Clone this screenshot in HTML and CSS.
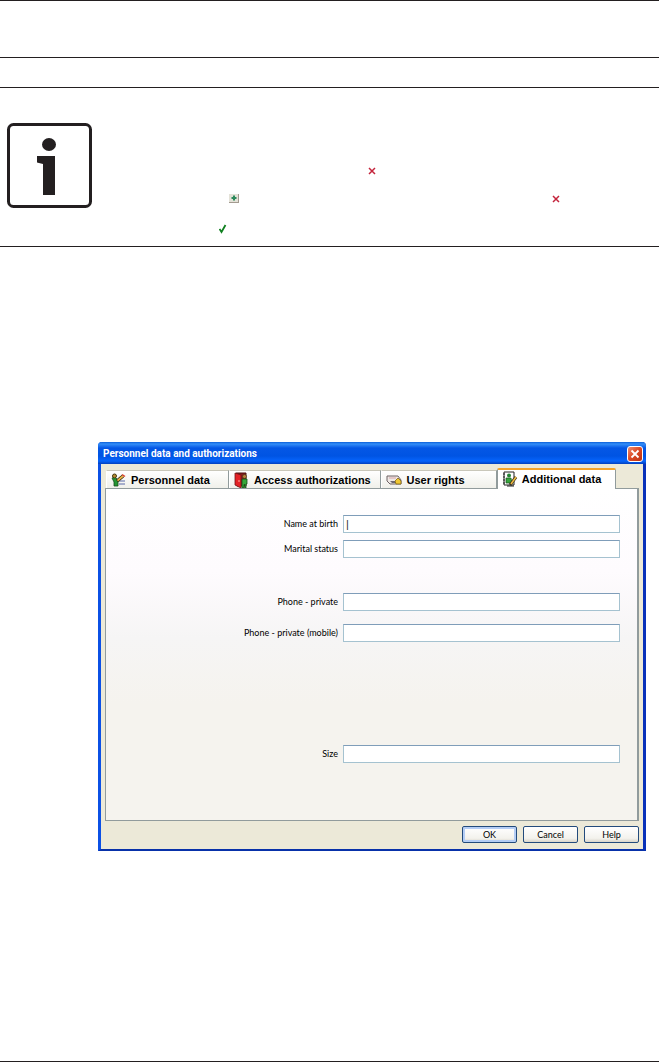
FILE: index.html
```html
<!DOCTYPE html>
<html lang="en">
<head>
<meta charset="utf-8">
<title>Personnel data and authorizations</title>
<link rel="stylesheet" href="styles.css">
</head>
<body>
<header class="page-head"></header>
<div class="head-rule"></div>
<section class="note">
  <svg class="info" viewBox="0 0 85 85" aria-label="Information">
    <rect x="1.5" y="1.5" width="82" height="82" rx="5" fill="#fff" stroke="#231f20" stroke-width="3"/>
    <ellipse cx="42" cy="21.500" rx="7" ry="6.500" fill="#231f20"/>
    <path d="M30 33H48V72H36V41L30 39.500Z" fill="#231f20"/>
  </svg>
  <div class="note-body">
    <div class="note-row row-remove">
      <svg class="mark" viewBox="0 0 8 8"><path d="M1 1L7 7M7 1L1 7" stroke="#c4243c" stroke-width="1.500"/></svg>
    </div>
    <div class="note-row row-add">
      <svg class="plus" viewBox="0 0 10 9"><path d="M0 0H10V9H0Z" fill="#a39b90"/><path d="M0 0H9V8H0Z" fill="#e4e2d8"/><path d="M5 1.500V6.500M2.500 4H7.500" stroke="#2c8a5c" stroke-width="2"/></svg>
      <svg class="mark" viewBox="0 0 8 8"><path d="M1 1L7 7M7 1L1 7" stroke="#c4243c" stroke-width="1.500"/></svg>
    </div>
    <div class="note-row row-apply">
      <svg class="check" viewBox="0 0 8 10"><path d="M.5 5L2.500 8L6.500 1" fill="none" stroke="#108020" stroke-width="1.800"/></svg>
    </div>
  </div>
</section>
<main class="content">
  <div class="dialog" role="dialog" aria-labelledby="title">
    <div class="titlebar">
      <h1 class="title" id="title">Personnel data and authorizations</h1>
      <button class="close" type="button" aria-label="Close"><svg viewBox="0 0 14 14"><path d="M3.500 3.500L10.500 10.500M10.500 3.500L3.500 10.500" stroke="#fff" stroke-width="1.800"/></svg></button>
    </div>
    <form class="dialog-body">
      <div class="tabs" role="tablist">
        <button class="tab tab-personnel" type="button" role="tab">
          <svg class="tab-icon" viewBox="0 0 16 16"><path d="M8 9H14M8 12H14" stroke="#5968a8"/><path d="M1 6L4 5L7 8V14H3V10Z" fill="#239532" stroke="#174d1d" stroke-width=".8"/><circle cx="3.500" cy="4" r="2" fill="#b98c30" stroke="#443810"/><path d="M6 9L12 4" stroke="#3b3013" stroke-width="3.400"/><path d="M6.500 8.600L12 4" stroke="#edb647" stroke-width="1.800"/><path d="M11 2.500L14 4.500" stroke="#d94030" stroke-width="1.500"/></svg>Personnel data</button>
        <button class="tab tab-access" type="button" role="tab">
          <svg class="tab-icon" viewBox="0 0 16 16"><path d="M2 1H12V14H3Z" fill="#851c1c" stroke="#4e1111"/><path d="M1 1L7 3V16L1 13Z" fill="#e32226" stroke="#731318" stroke-width=".8"/><circle cx="10.500" cy="4.500" r="2" fill="#b8823d" stroke="#49351c" stroke-width=".7"/><path d="M8 7H13V12H12V16H10.800V12.500H10V16H8Z" fill="#36a639" stroke="#125018" stroke-width=".8"/><path d="M5 8V10" stroke="#ffb3a0"/></svg>Access authorizations</button>
        <button class="tab tab-rights" type="button" role="tab">
          <svg class="tab-icon" viewBox="0 0 16 16"><path d="M1 4H12L15 8V12H4L1 9Z" fill="#eee9e5" stroke="#6e6265"/><path d="M3 6H10" stroke="#d8a3a8"/><path d="M4 9H9L11 11H6Z" fill="#6d6873"/><path d="M9 9L12 6L15 9V12H10Z" fill="#f0c832" stroke="#806517" stroke-width=".8"/></svg>User rights</button>
        <button class="tab tab-additional active" type="button" role="tab" aria-selected="true">
          <svg class="tab-icon" viewBox="0 0 16 16"><path d="M2 1H12V14H2Z" fill="#fff" stroke="#222"/><path d="M1 3H3M1 6H3M1 9H3M1 12H3" stroke="#222"/><circle cx="7" cy="4.500" r="2" fill="#248233"/><path d="M4 7H9L10 12H4Z" fill="#36a53b" stroke="#17551e" stroke-width=".7"/><path d="M8 14L14 6" stroke="#40351e" stroke-width="3"/><path d="M9 13L14 6" stroke="#f2bd42" stroke-width="1.500"/><path d="M5 15H12" stroke="#222"/></svg>Additional data</button>
      </div>
      <div class="panel" role="tabpanel">
        <label class="label" for="birth">Name at birth</label><input class="field" id="birth" type="text" value="|">
        <label class="label" for="marital">Marital status</label><input class="field" id="marital" type="text">
        <label class="label spaced" for="phone">Phone - private</label><input class="field spaced" id="phone" type="text">
        <label class="label near" for="mobile">Phone - private (mobile)</label><input class="field near" id="mobile" type="text">
        <label class="label far" for="size">Size</label><input class="field far" id="size" type="text">
      </div>
      <div class="actions">
        <button class="button default" type="button">OK</button>
        <button class="button" type="button">Cancel</button>
        <button class="button" type="button">Help</button>
      </div>
    </form>
  </div>
</main>
<footer class="page-foot"></footer>
</body>
</html>
```
FILE: styles.css
```css
* { box-sizing: border-box; }

body {
  display: flex;
  flex-direction: column;
  min-height: 100vh;
  margin: 0;
  background: #fff;
  color: #000;
  font-family: "Liberation Sans", Arial, sans-serif;
}

svg { display: block; flex: none; }

.page-head {
  height: 58px;
  border-top: 1px solid #231f20;
  border-bottom: 1px solid #231f20;
}

.head-rule { height: 30px; border-bottom: 1px solid #231f20; }

.note {
  display: flex;
  padding: 35px 0 12px 7px;
  border-bottom: 1px solid #231f20;
}

.info { width: 85px; height: 85px; }
.note-body { flex: 1; padding-top: 44px; }
.note-row { display: flex; align-items: flex-end; }
.mark { width: 8px; height: 8px; }
.plus { width: 10px; height: 9px; }
.check { width: 8px; height: 10px; }
.row-remove { padding-left: 276px; }
.row-add { padding: 19px 0 0 137px; gap: 313px; }
.row-apply { padding: 21px 0 0 127px; }

.content { flex: 1; padding: 195px 13px 0 98px; }

.dialog {
  border: 3px solid #0b50e5;
  border-top: 0;
  border-right-color: #0831b9;
  border-bottom: 2px solid #0831a9;
  border-radius: 4px 4px 0 0;
  background: #ece9d8;
}

.titlebar {
  display: flex;
  align-items: center;
  justify-content: space-between;
  height: 22px;
  margin: 0 -3px;
  padding: 2px 3px 0 5px;
  border-radius: 4px 4px 0 0;
  background: linear-gradient(#0c5fd8 0, #338ef8 2px, #0557e5 6px, #0054e3 14px, #0664fc 19px, #0340bd 22px);
}

.title {
  margin: 0;
  color: #fff;
  font: bold 10px/14px Roboto, sans-serif;
}

.close {
  width: 16px;
  height: 16px;
  padding: 0;
  border: 1px solid #fff;
  border-radius: 3px;
  background: linear-gradient(135deg, #f18e70, #da4823 50%, #bb3212);
}

.dialog-body { padding: 4px 4px 6px; }
.tabs { display: flex; align-items: flex-end; height: 20px; padding-left: 1px; }

.tab {
  display: flex;
  align-items: center;
  gap: 4px;
  height: 18px;
  padding: 0 0 0 4px;
  border: 1px solid #919b9c;
  border-top-color: #c9c7ba;
  border-left-color: #fff;
  border-bottom: 0;
  background: linear-gradient(#fff, #f0f0ea);
  color: #000;
  font: bold 11px/16px "Liberation Sans", Arial, sans-serif;
  white-space: nowrap;
}

.tab-icon { width: 16px; height: 16px; }
.tab-personnel { flex: 123; }
.tab-access { flex: 154; }
.tab-rights { flex: 115; }
.tab-additional { flex: 119; margin-right: 23px; }

.active {
  height: 21px;
  margin-bottom: -1px;
  padding-bottom: 2px;
  border-top: 2px solid #f5a429;
  border-left-color: #919b9c;
  border-radius: 2px 2px 0 0;
  background: #fff;
}

.panel {
  display: grid;
  grid-template-columns: 232px 1fr;
  column-gap: 5px;
  row-gap: 7px;
  align-items: center;
  padding: 26px 17px 57px 0;
  border: 1px solid #919b9c;
  border-right-width: 2px;
  background: linear-gradient(#fff 0, #fefbfe 25%, #f6f5f5 45%, #f5f3ee 65%, #f5f3ee);
}

.label {
  font: 9px/14px Lato, "Liberation Sans", sans-serif;
  text-align: right;
}

.field {
  width: 100%;
  height: 18px;
  padding: 0 2px;
  border: 1px solid #a5c2d0;
  border-top-color: #7f9db9;
  border-radius: 0;
  background: #fff;
  color: #333;
  font: 11px/14px "Liberation Sans", Arial, sans-serif;
}

.spaced { margin-top: 28px; }
.near { margin-top: 6px; }
.far { margin-top: 96px; }

.actions {
  display: flex;
  justify-content: flex-end;
  gap: 6px;
  padding-top: 5px;
}

.button {
  width: 55px;
  height: 17px;
  padding: 0;
  border: 1px solid #234b7c;
  border-radius: 2px;
  background: linear-gradient(#fff, #f3f2ed 75%, #d9d5ca);
  color: #000;
  font: 9px/14px Lato, "Liberation Sans", sans-serif;
}

.default { box-shadow: inset 0 0 0 2px #b4cdf5; }
.page-foot { border-top: 1px solid #231f20; }
```
